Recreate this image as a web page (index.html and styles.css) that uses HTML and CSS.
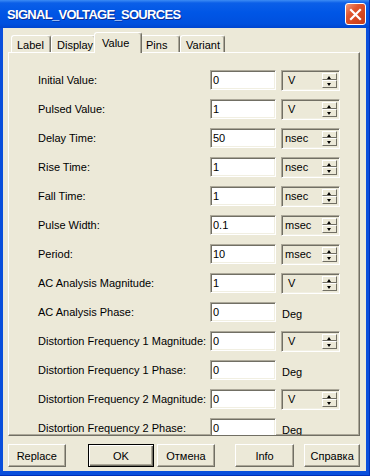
FILE: index.html
```html
<!DOCTYPE html>
<html lang="en">
<head>
  <meta charset="UTF-8" />
  <title>SIGNAL_VOLTAGE_SOURCES</title>
  <link rel="stylesheet" href="styles.css">
</head>
<body>
  <div class="window">
    <div class="titlebar">
      <span class="title">SIGNAL_VOLTAGE_SOURCES</span>
      <button class="close" aria-label="Close">
        <svg width="19" height="19" viewBox="0 0 19 19">
          <path d="M5 5 L14 14 M14 5 L5 14" stroke="#fff" stroke-width="2.2" stroke-linecap="square" fill="none"/>
        </svg>
      </button>
    </div>

    <div class="body">
      <div class="tabs">
        <div class="tab">Label</div>
        <div class="tab wide">Display</div>
        <div class="tab wide active">Value</div>
        <div class="tab">Pins</div>
        <div class="tab wide">Variant</div>
      </div>

      <div class="panel">
        <div class="row">
          <label>Initial Value:</label>
          <input class="field" value="0">
          <div class="unit"><span class="unit-v">V</span><div class="spin"><span class="up"></span><span class="down"></span></div></div>
        </div>
        <div class="row">
          <label>Pulsed Value:</label>
          <input class="field" value="1">
          <div class="unit"><span class="unit-v">V</span><div class="spin"><span class="up"></span><span class="down"></span></div></div>
        </div>
        <div class="row">
          <label>Delay Time:</label>
          <input class="field" value="50">
          <div class="unit"><span>nsec</span><div class="spin"><span class="up"></span><span class="down"></span></div></div>
        </div>
        <div class="row">
          <label>Rise Time:</label>
          <input class="field" value="1">
          <div class="unit"><span>nsec</span><div class="spin"><span class="up"></span><span class="down"></span></div></div>
        </div>
        <div class="row">
          <label>Fall Time:</label>
          <input class="field" value="1">
          <div class="unit"><span>nsec</span><div class="spin"><span class="up"></span><span class="down"></span></div></div>
        </div>
        <div class="row">
          <label>Pulse Width:</label>
          <input class="field" value="0.1">
          <div class="unit"><span>msec</span><div class="spin"><span class="up"></span><span class="down"></span></div></div>
        </div>
        <div class="row">
          <label>Period:</label>
          <input class="field" value="10">
          <div class="unit"><span>msec</span><div class="spin"><span class="up"></span><span class="down"></span></div></div>
        </div>
        <div class="row">
          <label>AC Analysis Magnitude:</label>
          <input class="field" value="1">
          <div class="unit"><span class="unit-v">V</span><div class="spin"><span class="up"></span><span class="down"></span></div></div>
        </div>
        <div class="row">
          <label>AC Analysis Phase:</label>
          <input class="field" value="0">
          <span class="deg">Deg</span>
        </div>
        <div class="row">
          <label>Distortion Frequency 1 Magnitude:</label>
          <input class="field" value="0">
          <div class="unit"><span class="unit-v">V</span><div class="spin"><span class="up"></span><span class="down"></span></div></div>
        </div>
        <div class="row">
          <label>Distortion Frequency 1 Phase:</label>
          <input class="field" value="0">
          <span class="deg">Deg</span>
        </div>
        <div class="row">
          <label>Distortion Frequency 2 Magnitude:</label>
          <input class="field" value="0">
          <div class="unit"><span class="unit-v">V</span><div class="spin"><span class="up"></span><span class="down"></span></div></div>
        </div>
        <div class="row">
          <label>Distortion Frequency 2 Phase:</label>
          <input class="field" value="0">
          <span class="deg">Deg</span>
        </div>
      </div>

      <div class="buttons">
        <button class="btn replace">Replace</button>
        <button class="btn ok">OK</button>
        <button class="btn cancel">Отмена</button>
        <button class="btn info">Info</button>
        <button class="btn help">Справка</button>
      </div>
    </div>
  </div>
</body>
</html>
```

FILE: styles.css
```css
* {
  box-sizing: border-box;
}
body {
  margin: 0;
  font-family: "Liberation Sans", Arial, sans-serif;
  font-size: 11px;
  color: #000;
}
.window {
  width: 370px;
  height: 476px;
  display: flex;
  flex-direction: column;
  background: #0a4fdc;
  padding: 0 3px 4px;
  border-right: 1px solid #0030b8;
  border-bottom: 1px solid #0030b8;
}
.titlebar {
  height: 29px;
  margin: 0 -3px;
  padding: 0 3px 0 7px;
  display: flex;
  align-items: center;
  justify-content: space-between;
  background: linear-gradient(#3d8cf4 0, #0b5fe8 3px, #0056e6 45%, #0050de 85%, #0045cf 100%);
}
.title {
  color: #fff;
  font-weight: bold;
  font-size: 13px;
  letter-spacing: -0.7px;
  text-shadow: 1px 1px #0a2a90;
  margin-top: 1px;
}
.close {
  width: 21px;
  height: 22px;
  padding: 0;
  border: 1px solid #fff;
  border-radius: 3px;
  background: linear-gradient(135deg, #ee9a80 0, #e0562f 35%, #d2451f 70%, #c53e1c 100%);
  display: flex;
  align-items: center;
  justify-content: center;
}
.body {
  flex: 1;
  background: #ece9d8;
  padding: 4px 6px 4px 5px;
  display: flex;
  flex-direction: column;
}
.tabs {
  height: 20px;
  padding-left: 3px;
  display: flex;
  align-items: flex-end;
}
.tab {
  width: 40px;
  height: 17px;
  padding: 3px 0 0 5px;
  line-height: 13px;
  border: 1px solid #fff;
  border-right-color: #716f64;
  border-bottom: none;
  border-radius: 3px 3px 0 0;
  box-shadow: inset -1px 0 #aca899;
  background: #ece9d8;
}
.tab.wide {
  width: 45px;
}
.tab.active {
  width: 48px;
  height: 21px;
  margin: 0 -2px -1px;
  padding: 4px 0 0 7px;
  position: relative;
  z-index: 1;
}
.panel {
  height: 384px;
  border: 1px solid #fff;
  border-right-color: #716f64;
  border-bottom-color: #716f64;
  box-shadow: inset -1px -1px #aca899;
  overflow: hidden;
  padding: 17px 0 0 29px;
  display: flex;
  flex-direction: column;
  gap: 9px;
}
.row {
  height: 20px;
  flex-shrink: 0;
  display: flex;
  align-items: center;
}
.row label {
  width: 172px;
}
.field {
  width: 66px;
  height: 20px;
  padding: 0 0 0 2px;
  font: inherit;
  color: #000;
  background: #fff;
  border: 1px solid;
  border-color: #aca899 #fff #fff #aca899;
  box-shadow: inset 1px 1px #716f64, inset -1px -1px #f1efe2;
  outline: none;
}
.unit {
  width: 59px;
  height: 21px;
  margin-left: 5px;
  padding: 2px 2px 2px 3px;
  border: 1px solid;
  border-color: #aca899 #fff #fff #aca899;
  box-shadow: inset 1px 1px #716f64, inset -1px -1px #f1efe2;
  display: flex;
  justify-content: space-between;
  line-height: 15px;
}
.unit-v {
  padding-left: 3px;
}
.spin {
  width: 15px;
  display: flex;
  flex-direction: column;
}
.spin span {
  flex: 1;
  position: relative;
  border: 1px solid;
  border-color: #fff #716f64 #716f64 #fff;
  background: #ece9d8;
}
.spin span::after {
  content: "";
  position: absolute;
  left: 4px;
  top: 2px;
  border-left: 2.5px solid transparent;
  border-right: 2.5px solid transparent;
}
.spin .up::after {
  border-bottom: 3px solid #000;
}
.spin .down::after {
  border-top: 3px solid #000;
}
.deg {
  margin-left: 6px;
  align-self: flex-start;
  padding-top: 6px;
  line-height: 13px;
}
.buttons {
  margin-top: 8px;
  height: 23px;
  display: flex;
}
.btn {
  height: 23px;
  padding: 0;
  font: inherit;
  color: #000;
  background: #ece9d8;
  border: 1px solid;
  border-color: #fff #716f64 #716f64 #fff;
  box-shadow: inset -1px -1px #aca899;
}
.replace {
  width: 58px;
}
.ok {
  width: 67px;
  margin-left: 22px;
  border-color: #000;
  box-shadow: inset 1px 1px #fff, inset -1px -1px #716f64, inset -2px -2px #aca899;
}
.cancel {
  width: 58px;
  margin-left: 3px;
}
.info {
  width: 60px;
  margin-left: 20px;
}
.help {
  width: 56px;
  margin-left: 10px;
}
```
